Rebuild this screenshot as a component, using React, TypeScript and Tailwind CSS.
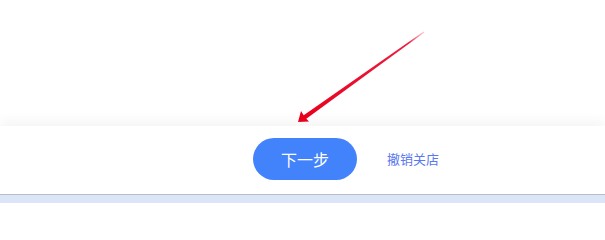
export default function App() {
  return (
    <div className="relative flex h-[203px] w-[605px] flex-col overflow-hidden bg-white font-['Noto_Sans_CJK_SC',sans-serif]">
      <div className="h-[126px] shrink-0 bg-white" />

      {/* footer bar */}
      <div className="flex h-[69px] shrink-0 items-center gap-[30px] border-b border-[#b9bdca] bg-white pl-[253px] pb-[2px] shadow-[0_-6px_10px_rgba(0,0,0,0.04)]">
        <button className="flex h-[42px] w-[104px] items-center justify-center rounded-full bg-[#4282fb] text-[16px] text-white">
          下一步
        </button>
        <a href="#" className="text-[13px] text-[#5a78f0] no-underline">
          撤销关店
        </a>
      </div>

      <div className="flex-1 bg-[#dce5f8]" />

      {/* annotation arrow */}
      <svg className="pointer-events-none absolute left-0 top-0" width="605" height="203" viewBox="0 0 605 203">
        <defs>
          <linearGradient id="fade" x1="424" y1="32" x2="300" y2="120" gradientUnits="userSpaceOnUse">
            <stop offset="0" stopColor="#f04a68" stopOpacity="0.3" />
            <stop offset="0.12" stopColor="#ee1c40" />
            <stop offset="1" stopColor="#e8001c" />
          </linearGradient>
        </defs>
        <polygon
          fill="url(#fade)"
          points="298,122 309,121.5 306.3,118.8 424.3,32.4 423.7,31.6 303.7,115.2 301,111"
        />
      </svg>
    </div>
  );
}
